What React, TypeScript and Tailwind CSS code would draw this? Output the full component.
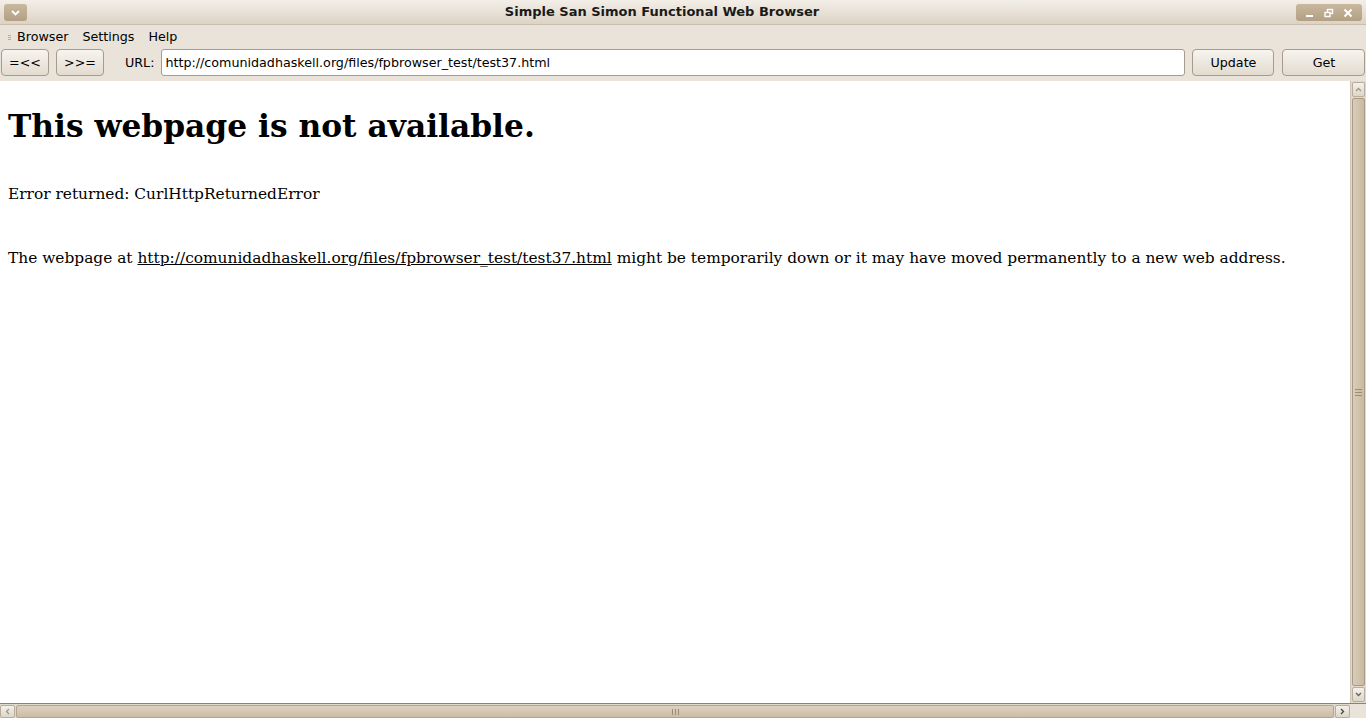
import React from "react";

const ui = { fontFamily: '"DejaVu Sans", "Liberation Sans", sans-serif' };
const serif = { fontFamily: '"DejaVu Serif", "Liberation Serif", serif' };

function GtkButton({ label, className }: { label: string; className: string }) {
  return (
    <div
      className={`flex items-center justify-center h-[27px] rounded-[4px] border border-[#a79c8c] bg-gradient-to-b from-[#f7f4ef] to-[#e2dbcf] text-[12.7px] text-black ${className}`}
    >
      {label}
    </div>
  );
}

export default function App() {
  const url = "http://comunidadhaskell.org/files/fpbrowser_test/test37.html";
  return (
    <div className="w-[1366px] h-[718px] flex flex-col bg-[#e9e3d9] overflow-hidden" style={ui}>
      {/* title bar */}
      <div className="relative h-[25px] flex items-center justify-center pr-[42px] bg-gradient-to-b from-[#f3efe8] to-[#dcd3c5] border-b border-[#c9bfae]">
        <div className="absolute left-[4px] top-[4px] w-[23px] h-[17px] rounded-[3px] bg-gradient-to-b from-[#c8b89f] to-[#b3a083] flex items-center justify-center">
          <svg width="9" height="6" viewBox="0 0 9 6">
            <path d="M1 1 L4.5 4.5 L8 1" stroke="#fff" strokeWidth="1.8" fill="none" />
          </svg>
        </div>
        <span className="text-[13px] font-bold text-[#1a1a1a]">Simple San Simon Functional Web Browser</span>
        <div className="absolute right-[4px] top-[4px] w-[66px] h-[17px] rounded-[3px] bg-gradient-to-b from-[#c8b89f] to-[#b3a083] flex items-center justify-around px-[4px]">
          <svg width="10" height="10" viewBox="0 0 10 10">
            <rect x="1" y="7" width="7" height="2" fill="#fff" />
          </svg>
          <svg width="10" height="10" viewBox="0 0 10 10">
            <rect x="3.5" y="1.5" width="5" height="4" stroke="#fff" strokeWidth="1.4" fill="none" />
            <rect x="1" y="4.5" width="5" height="4" fill="#b9a78b" stroke="#fff" strokeWidth="1.4" />
          </svg>
          <svg width="10" height="10" viewBox="0 0 10 10">
            <path d="M1.5 1.5 L8.5 8.5 M8.5 1.5 L1.5 8.5" stroke="#fff" strokeWidth="2" />
          </svg>
        </div>
      </div>

      {/* menu bar */}
      <div className="h-[23px] pt-[1px] flex items-center text-[12.7px] text-black">
        <div className="w-[17px] flex flex-col items-center gap-[1px] pl-[2px]">
          <div className="w-[3px] h-[1px] bg-[#b9ad9b]" />
          <div className="w-[3px] h-[1px] bg-[#b9ad9b]" />
          <div className="w-[3px] h-[1px] bg-[#b9ad9b]" />
        </div>
        <span>Browser</span>
        <span className="ml-[14px]">Settings</span>
        <span className="ml-[14px]">Help</span>
      </div>

      {/* toolbar */}
      <div className="h-[33px] flex items-start pt-[1px]">
        <GtkButton label="=<<" className="ml-[1px] w-[48px]" />
        <GtkButton label=">>=" className="ml-[7px] w-[48px]" />
        <span className="ml-[21px] text-[12.7px] h-[27px] flex items-center">URL:</span>
        <div className="ml-[7px] w-[1024px] h-[27px] bg-white border border-[#a79c8c] rounded-[3px] flex items-center pl-[3px] text-[12.7px] text-black">
          {url}
        </div>
        <GtkButton label="Update" className="ml-[7px] w-[82px]" />
        <GtkButton label="Get" className="ml-[8px] w-[83px]" />
      </div>

      {/* content + vertical scrollbar */}
      <div className="flex flex-1 min-h-0">
        <div className="flex-1 bg-white text-black" style={serif}>
          <h1 className="text-[31.3px] font-bold leading-[40px] ml-[8px] mt-[25px]">This webpage is not available.</h1>
          <p className="text-[15.4px] leading-[20px] ml-[8px] mt-[38px]">Error returned: CurlHttpReturnedError</p>
          <p className="text-[15.4px] leading-[20px] ml-[8px] mt-[44px]">
            The webpage at <span className="underline">{url}</span> might be temporarily down or it may have moved permanently to a new web address.
          </p>
        </div>
        <div className="w-[16px] flex flex-col bg-[#e0d9cd] border-l border-[#cfc6b8]">
          <div className="h-[15px] mx-[1px] mt-[1px] rounded-[2px] border border-[#b8ad9c] bg-gradient-to-b from-[#f4f1ec] to-[#ddd5c8] flex items-center justify-center">
            <svg width="7" height="5" viewBox="0 0 7 5">
              <path d="M1 4 L3.5 1.5 L6 4" stroke="#9e9585" strokeWidth="1.3" fill="none" />
            </svg>
          </div>
          <div className="flex-1 mx-[1px] my-[1px] rounded-[2px] border border-[#a89a84] bg-gradient-to-r from-[#d9ccb8] to-[#c9b9a1] flex items-center justify-center">
            <div className="flex flex-col gap-[2px]">
              <div className="w-[7px] h-[1px] bg-[#9c8c75]" />
              <div className="w-[7px] h-[1px] bg-[#9c8c75]" />
              <div className="w-[7px] h-[1px] bg-[#9c8c75]" />
            </div>
          </div>
          <div className="h-[15px] mx-[1px] mb-[1px] rounded-[2px] border border-[#b8ad9c] bg-gradient-to-b from-[#f4f1ec] to-[#ddd5c8] flex items-center justify-center">
            <svg width="7" height="5" viewBox="0 0 7 5">
              <path d="M1 1 L3.5 3.5 L6 1" stroke="#6a6256" strokeWidth="1.3" fill="none" />
            </svg>
          </div>
        </div>
      </div>

      {/* horizontal scrollbar */}
      <div className="h-[15px] flex bg-[#e0d9cd] border-t border-[#8c8273]">
        <div className="w-[15px] mt-[1px] rounded-[2px] border border-[#b8ad9c] bg-gradient-to-b from-[#f4f1ec] to-[#ddd5c8] flex items-center justify-center">
          <svg width="5" height="7" viewBox="0 0 5 7">
            <path d="M4 1 L1.5 3.5 L4 6" stroke="#9e9585" strokeWidth="1.3" fill="none" />
          </svg>
        </div>
        <div className="flex-1 mt-[1px] mx-[1px] rounded-[2px] border border-[#b4a590] bg-gradient-to-b from-[#ddd1bf] to-[#cbbca6] flex items-center justify-center gap-[2px]">
          <div className="w-[1px] h-[6px] bg-[#9c8c75]" />
          <div className="w-[1px] h-[6px] bg-[#9c8c75]" />
          <div className="w-[1px] h-[6px] bg-[#9c8c75]" />
        </div>
        <div className="w-[15px] mt-[1px] rounded-[2px] border border-[#b8ad9c] bg-gradient-to-b from-[#f4f1ec] to-[#ddd5c8] flex items-center justify-center">
          <svg width="5" height="7" viewBox="0 0 5 7">
            <path d="M1 1 L3.5 3.5 L1 6" stroke="#4a443b" strokeWidth="1.3" fill="none" />
          </svg>
        </div>
        <div className="w-[16px] bg-[#e9e3d9]" />
      </div>
    </div>
  );
}
